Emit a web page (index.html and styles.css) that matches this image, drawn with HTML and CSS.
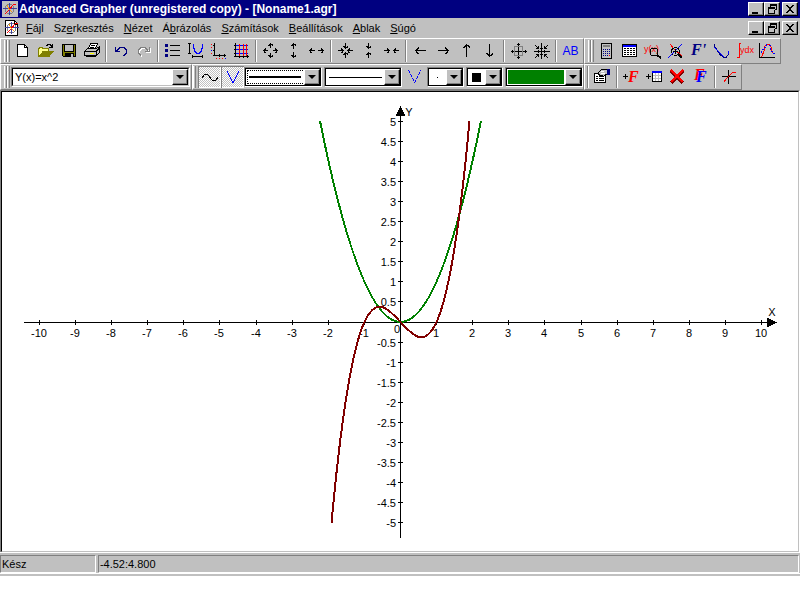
FILE: index.html
```html
<!DOCTYPE html>
<html lang="hu">
<head>
<meta charset="utf-8">
<title>Advanced Grapher</title>
<link rel="stylesheet" href="styles.css">
</head>
<body>
<svg class="defs" aria-hidden="true">
  <defs>
    <g id="min"><path d="M3 9h6v2H3z"/></g>
    <g id="restore"><path d="M5 1h7v6h-3v-1h2V3H6v1H5zM3 4h7v7H3zM4 6v4h5V6z" fill-rule="evenodd"/></g>
    <g id="close"><path d="M3 2h2v1h1v1h2V3h1V2h2v1h-1v1H9v1H8v2h1v1h1v1h1v1H9V9H8V8H6v1H5v1H3V9h1V8h1V7h1V5H5V4H4V3H3z"/></g>
    <g id="logo" fill="none">
      <circle cx="7.500" cy="8" r="4.500" stroke="#808080" stroke-width="1"/>
      <path d="M7.500 2v12M1 7.500h14" stroke="#4040a0"/>
      <path d="M3 13l3-3 5-6 3-1" stroke="#f00"/>
      <path d="M5 4l2 4 3 3" stroke="#f90"/>
    </g>
  </defs>
</svg>

<div class="app">
  <header class="titlebar">
    <svg class="logo tile" viewBox="0 0 16 16"><use href="#logo"/></svg>
    <h1>Advanced Grapher (unregistered copy) - [Noname1.agr]</h1>
    <div class="winbtns">
      <button aria-label="Minimize"><svg viewBox="0 0 14 12"><use href="#min"/></svg></button>
      <button aria-label="Restore"><svg viewBox="0 0 14 12"><use href="#restore"/></svg></button>
      <button aria-label="Close"><svg viewBox="0 0 14 12"><use href="#close"/></svg></button>
    </div>
  </header>

  <nav class="menubar">
    <svg class="logo" viewBox="0 0 16 16"><path d="M1.500.5h9l3 3v12h-12z" fill="#fff" stroke="#000"/><path d="M10.500 1v3H14" fill="none" stroke="#000"/><use href="#logo"/></svg>
    <button><u>F</u>ájl</button>
    <button>Sz<u>e</u>rkesztés</button>
    <button><u>N</u>ézet</button>
    <button>Á<u>b</u>rázolás</button>
    <button><u>S</u>zámítások</button>
    <button><u>B</u>eállítások</button>
    <button><u>A</u>blak</button>
    <button><u>S</u>úgó</button>
    <div class="winbtns">
      <button aria-label="Minimize document"><svg viewBox="0 0 14 12"><use href="#min"/></svg></button>
      <button aria-label="Restore document"><svg viewBox="0 0 14 12"><use href="#restore"/></svg></button>
      <button aria-label="Close document"><svg viewBox="0 0 14 12"><use href="#close"/></svg></button>
    </div>
  </nav>

  <div class="toolrow">
    <div class="group">
      <i class="grip"></i>
      <button class="tool" aria-label="New"><svg viewBox="0 0 23 22"><path d="M6.500 4.500h7l3 3v9h-10z" fill="#fff" stroke="#000"/><path d="M13.500 4v3.500H17" fill="none" stroke="#000"/></svg></button>
      <button class="tool" aria-label="Open"><svg viewBox="0 0 23 22"><path d="M4.500 16.500v-8h1v-1h3v1h6v3" fill="#ff8" stroke="#808000"/><path d="M5 16.500l4-5h10l-4 5z" fill="#808000" stroke="#808000"/><path d="M12 5.500h1v-1h3v1h1v1h1M18.500 4v4M15 7.500h4" fill="none" stroke="#000"/></svg></button>
      <button class="tool" aria-label="Save"><svg viewBox="0 0 23 22"><path d="M5.500 4.500h13v12h-12l-1-1z" fill="#808000" stroke="#000"/><path d="M8 5h8v6H8z" fill="#c0c0c0"/><path d="M7.500 5v6.500h9V5" fill="none" stroke="#000"/><path d="M8 13h9v4H8z"/><path d="M14 14h2v3h-2z" fill="#c0c0c0"/></svg></button>
      <button class="tool" aria-label="Print"><svg viewBox="0 0 23 22"><path d="M8.500 8.500l2-5h7l-2 5z" fill="#fff" stroke="#000"/><path d="M11 5.500h4M10 7.500h4" stroke="#000"/><path d="M4.500 11.500l3-3h9l3-2v6l-3 3h-12z" fill="#c0c0c0" stroke="#000"/><path d="M4.500 11.500h12v3M16 11.500l3-3M6.500 14.500v2h9l3-3" fill="none" stroke="#000"/><path d="M10 13h4v1h-4z" fill="#ff0"/></svg></button>
      <i class="sep"></i>
      <button class="tool" aria-label="Undo"><svg viewBox="0 0 23 22"><path d="M6.500 7v5M6 11.500h5M7 10.500h1v-1h1v-1h1v-1h5v1h1v1h1v4h-1v1h-1v1h-1" fill="none" stroke="#000080"/></svg></button>
      <button class="tool" aria-label="Redo" disabled><svg viewBox="0 0 23 22"><g fill="none"><path d="M18.500 8v5M14 12.500h5M17 11.500h-1v-1h-1v-1h-1v-1H9v1H8v1H7v4h1v1h1v1h1" stroke="#fff"/><path d="M17.500 7v5M13 11.500h5M16 10.500h-1v-1h-1v-1h-1v-1H8v1H7v1H6v4h1v1h1v1h1" stroke="#808080"/></g></svg></button>
      <i class="sep"></i>
      <button class="tool" aria-label="Graph list"><svg viewBox="0 0 23 22"><path d="M4 4h3v3H4zM4 9h3v3H4zM4 14h3v3H4z" fill="#000080"/><path d="M9 5.500h10M9 10.500h10M9 15.500h10" stroke="#000"/></svg></button>
      <button class="tool" aria-label="Graph properties"><svg viewBox="0 0 23 22"><path d="M4 3.500h3M5.500 4v9M4 13.500h3M8 16.500h11M8.500 15v3M18.500 15v3" stroke="#000"/><path d="M9.500 4v4h1v3h1v1h1v1h3v-1h1v-1h1V8h1V4" fill="none" stroke="#00f"/></svg></button>
      <button class="tool" aria-label="Axes"><svg viewBox="0 0 23 22"><path d="M7.500 3v13M6 15.500h13M6 5.500h2M6 10.500h2M12.500 14v3M17.500 14v3" stroke="#000"/><path d="M4 4.500h1M4 7.500h1M4 13.500h1M9 18.500h1M12 18.500h1M15 18.500h1" stroke="#f00"/><path d="M4 10.500h1M18 18.500h1" stroke="#00f"/></svg></button>
      <button class="tool" aria-label="Grid"><svg viewBox="0 0 23 22"><path d="M5.500 3v14M4 16.500h15M4 5.500h2M4 9.500h2M4 13.500h2M9.500 15v3M13.500 15v3M17.500 15v3" stroke="#000"/><path d="M6 5.500h12M6 9.500h12M6 13.500h12" stroke="#00f"/><path d="M9.500 4v12M13.500 4v12M16.500 4v12" stroke="#f00"/></svg></button>
      <i class="sep"></i>
      <button class="tool" aria-label="Zoom in"><svg viewBox="0 0 23 22"><path d="M11.500 3v5M9 5.500h1v-1h3v1h1M11.500 13v5M9 15.500h1v1h3v-1h1M4 10.500h5M6.500 8v1h-1v3h1v1M14 10.500h5M16.500 8v1h1v3h-1v1" fill="none" stroke="#000"/></svg></button>
      <button class="tool" aria-label="Stretch vertically"><svg viewBox="0 0 23 22"><path d="M11.500 3v6M9 5.500h1v-1h3v1h1M11.500 12v6M9 15.500h1v1h3v-1h1" fill="none" stroke="#000"/></svg></button>
      <button class="tool" aria-label="Stretch horizontally"><svg viewBox="0 0 23 22"><path d="M4 10.500h6M6.500 8v1h-1v3h1v1M13 10.500h6M16.500 8v1h1v3h-1v1" fill="none" stroke="#000"/></svg></button>
      <i class="sep"></i>
      <button class="tool" aria-label="Zoom out"><svg viewBox="0 0 23 22"><path d="M11.500 3v6M9 6.500h1v1h3v-1h1M11.500 12v6M9 14.500h1v-1h3v1h1M4 10.500h6M7.500 8v1h1v3h-1v1M13 10.500h6M15.500 8v1h-1v3h1v1" fill="none" stroke="#000"/></svg></button>
      <button class="tool" aria-label="Shrink vertically"><svg viewBox="0 0 23 22"><path d="M11.500 3v6M9 6.500h1v1h3v-1h1M11.500 12v6M9 14.500h1v-1h3v1h1" fill="none" stroke="#000"/></svg></button>
      <button class="tool" aria-label="Shrink horizontally"><svg viewBox="0 0 23 22"><path d="M4 10.500h6M7.500 8v1h1v3h-1v1M13 10.500h6M15.500 8v1h-1v3h1v1" fill="none" stroke="#000"/></svg></button>
      <i class="sep"></i>
      <button class="tool" aria-label="Left"><svg viewBox="0 0 23 22"><path d="M6 10.500h11M9.500 7v1h-1v1h-1v3h1v1h1v1" fill="none" stroke="#000"/></svg></button>
      <button class="tool" aria-label="Right"><svg viewBox="0 0 23 22"><path d="M6 10.500h11M13.500 7v1h1v1h1v3h-1v1h-1v1" fill="none" stroke="#000"/></svg></button>
      <button class="tool" aria-label="Up"><svg viewBox="0 0 23 22"><path d="M11.500 4v13M8 7.500h1v-1h1v-1h3v1h1v1h1" fill="none" stroke="#000"/></svg></button>
      <button class="tool" aria-label="Down"><svg viewBox="0 0 23 22"><path d="M11.500 4v13M8 13.500h1v1h1v1h3v-1h1v-1h1" fill="none" stroke="#000"/></svg></button>
      <i class="sep"></i>
      <button class="tool" aria-label="Default view"><svg viewBox="0 0 23 22"><path d="M4 11.500h16M11.500 3v16M10 4.500h3M10 17.500h3M5.500 10v3M18.500 10v3" stroke="#000"/><path d="M7.500 6.500h8v9h-8z" fill="none" stroke="#808080"/></svg></button>
      <button class="tool" aria-label="Fit view"><svg viewBox="0 0 23 22"><path d="M4 11.500h16M11.500 3v16M10 8.500h3M10 14.500h3M8.500 10v3M14.500 10v3M5 5l4 4M18 5l-4 4M5 18l4-4M18 18l-4-4M6 8.500h3M8.500 6v3M14 8.500h3M14.500 6v3M6 14.500h3M8.500 14v3M14 14.500h3M14.500 14v3" fill="none" stroke="#000"/></svg></button>
      <i class="sep"></i>
      <button class="tool ab">AB</button>
    </div>
    <div class="group">
      <i class="grip"></i>
      <button class="tool" aria-label="Calculator"><svg viewBox="0 0 23 22"><path d="M6.500 3.500h10v15h-10z" fill="#c0c0c0" stroke="#000"/><path d="M8 5h7v2H8z" fill="#808080"/><path d="M8 9.500h8M8 11.500h8M8 13.500h8M8 15.500h8" stroke="#000080" stroke-dasharray="1 1"/><path d="M14 15h1v1h-1z" fill="#f00"/></svg></button>
      <button class="tool" aria-label="Table"><svg viewBox="0 0 23 22"><path d="M4.500 4.500h14v12h-14z" fill="#fff" stroke="#000"/><path d="M5 5h13v2H5z" fill="#00f"/><path d="M6 8.500h11M6 10.500h11M6 12.500h11M6 14.500h11" stroke="#000" stroke-dasharray="2 1"/></svg></button>
      <button class="tool" aria-label="Evaluate"><svg viewBox="0 0 23 22"><text class="red mini" x="3" y="12">y(x)</text><circle cx="13" cy="12" r="4" fill="none" stroke="#000"/><path d="M16 15l4 3" stroke="#000" stroke-width="2"/></svg></button>
      <button class="tool" aria-label="Intersections"><svg viewBox="0 0 23 22"><path d="M4 18L18 4" stroke="#00f"/><path d="M6 4l4 5 8 7" fill="none" stroke="#f00"/><circle cx="11.500" cy="11.500" r="4" fill="none" stroke="#000"/><path d="M9 11.500h5M11.500 9v5" stroke="#000"/><path d="M14 14l4 4" stroke="#000" stroke-width="2"/></svg></button>
      <button class="tool" aria-label="Derivative"><svg viewBox="0 0 23 22"><text class="fn navy" x="4" y="15">F'</text></svg></button>
      <button class="tool" aria-label="Tangent"><svg viewBox="0 0 23 22"><path d="M4.500 4v2l3 5 3 4 3 2h3l2-3" fill="none" stroke="#000080"/><path d="M4 7l10 10M18.500 14v-3" stroke="#00f"/></svg></button>
      <button class="tool" aria-label="Integral"><svg viewBox="0 0 23 22"><path d="M8 3.500H6.500v14H4" fill="none" stroke="#f00"/><text class="red mini" x="7" y="13">ydx</text></svg></button>
      <button class="tool" aria-label="Regression"><svg viewBox="0 0 23 22"><path d="M3.500 3v14.500H19" fill="none" stroke="#000"/><path d="M5 16h1l2-5 1-5 2-2h2l2 3 1 5 2 2" fill="none" stroke="#f00"/><path d="M5 12h2v-3h2V5h5v4h2v3h2v4" fill="none" stroke="#00f" stroke-width="2" stroke-dasharray="1 3"/></svg></button>
    </div>
  </div>

  <div class="toolrow">
    <div class="group">
      <i class="grip"></i>
      <span class="combo function"><select aria-label="Function"><option>Y(x)=x^2</option></select><i class="arrow"></i></span>
    </div>
    <div class="group slim">
      <i class="grip"></i>
      <button class="tool on" aria-label="Show line" aria-pressed="true"><svg viewBox="0 0 23 22"><path d="M4 12l2-3 2-1 2 1 4 5 2 1 2-1 2-3" fill="none" stroke="#000" stroke-width="1"/></svg></button>
      <button class="tool on" aria-label="Show points" aria-pressed="true"><svg viewBox="0 0 23 22"><path d="M6 5l6 12 6-12" fill="none" stroke="#00f"/></svg></button>
      <span class="combo wide thick"><select aria-label="Line width"><option></option></select><i class="arrow"></i></span>
      <span class="combo wide thin"><select aria-label="Line style"><option></option></select><i class="arrow"></i></span>
      <button class="tool" aria-label="Points"><svg viewBox="0 0 23 22"><path d="M4 4h1v1H4zM5 6h1v1H5zM6 8h1v1H6zM7 10h1v1H7zM8 12h1v1H8zM9 14h1v1H9zM10 16h1v1h-1zM11 14h1v1h-1zM12 12h1v1h-1zM13 10h1v1h-1zM14 8h1v1h-1zM15 6h1v1h-1zM16 4h1v1h-1zM5 5h1v1H5zM7 9h1v1H7zM9 13h1v1H9zM11 15h1v1h-1zM13 11h1v1h-1zM15 7h1v1h-1z" fill="#00f"/></svg></button>
      <span class="combo small dot"><select aria-label="Point size"><option></option></select><i class="arrow"></i></span>
      <span class="combo small square"><select aria-label="Point shape"><option></option></select><i class="arrow"></i></span>
      <span class="combo wide green"><select aria-label="Colour"><option></option></select><i class="arrow"></i></span>
    </div>
    <div class="group flush">
      <i class="sep"></i>
      <button class="tool" aria-label="Properties"><svg viewBox="0 0 23 22"><path d="M3.500 7.500h11v9h-11z" fill="#fff" stroke="#000"/><path d="M5 10.500h2M8 10.500h5M5 12.500h2M8 12.500h5M5 14.500h2M8 14.500h5" stroke="#000"/><path d="M7 7l4-4h6v5l-3 1-2 2-1-2-2 1z" fill="#c0c0c0" stroke="#000"/><path d="M10 5.500h3M10 7.500h4" stroke="#fff"/><path d="M16 3h3v6h-3z" fill="#000080"/></svg></button>
      <i class="sep"></i>
      <button class="tool" aria-label="Add graph"><svg viewBox="0 0 23 22"><path d="M3 10.500h5M5.500 8v5" stroke="#000"/><text class="fn red" x="8" y="16">F</text></svg></button>
      <button class="tool" aria-label="Add table"><svg viewBox="0 0 23 22"><path d="M3 10.500h5M5.500 8v5" stroke="#000"/><path d="M9.500 5.500h9v10h-9z" fill="#fff" stroke="#000"/><path d="M9 5h10v2H9z" fill="#00f"/><path d="M10 9.500h8M10 12.500h8M12.500 7v8M15.500 7v8" stroke="#c0c0c0"/></svg></button>
      <button class="tool" aria-label="Delete"><svg viewBox="0 0 23 22"><path d="M5 5l12 12M17 5L5 17" stroke="#800000" stroke-width="3"/><path d="M5 4l12 12M17 4L5 16" stroke="#f00" stroke-width="2"/></svg></button>
      <button class="tool" aria-label="Duplicate"><svg viewBox="0 0 23 22"><text class="fn red" x="5" y="14">F</text><text class="fn blue" x="7" y="16">F</text></svg></button>
      <i class="sep"></i>
      <button class="tool" aria-label="Trace"><svg viewBox="0 0 23 22"><path d="M4 10.500h14M10.500 4v14" stroke="#000"/><path d="M6 16l2-3 4-4 2-2 4-1" fill="none" stroke="#f00"/></svg></button>
    </div>
  </div>

  <main class="sheet">
    <svg class="plot" viewBox="2 92 796 459" role="img" aria-label="Graph">
      <g class="axes">
        <path d="M24 322.500h745M400.500 112v426"/>
        <path d="M39.500 320v5M75.500 320v5M111.500 320v5M147.500 320v5M183.500 320v5M219.500 320v5M256.500 320v5M292.500 320v5M328.500 320v5M364.500 320v5M436.500 320v5M472.500 320v5M508.500 320v5M544.500 320v5M581.500 320v5M617.500 320v5M653.500 320v5M689.500 320v5M725.500 320v5M761.500 320v5"/>
        <path d="M398 121.500h5M398 141.500h5M398 161.500h5M398 181.500h5M398 201.500h5M398 221.500h5M398 241.500h5M398 261.500h5M398 281.500h5M398 301.500h5M398 342.500h5M398 362.500h5M398 382.500h5M398 402.500h5M398 422.500h5M398 442.500h5M398 462.500h5M398 482.500h5M398 502.500h5M398 522.500h5"/>
      </g>
      <path d="M400.500 106l5 10h-10zM777 322.500l-10 5v-10z"/>
      <g class="xlab">
        <text x="39" y="337">-10</text><text x="75" y="337">-9</text><text x="111" y="337">-8</text><text x="147" y="337">-7</text><text x="183" y="337">-6</text><text x="219" y="337">-5</text><text x="256" y="337">-4</text><text x="292" y="337">-3</text><text x="328" y="337">-2</text><text x="364" y="337">-1</text>
        <text x="397" y="333">0</text>
        <text x="436" y="337">1</text><text x="472" y="337">2</text><text x="508" y="337">3</text><text x="544" y="337">4</text><text x="581" y="337">5</text><text x="617" y="337">6</text><text x="653" y="337">7</text><text x="689" y="337">8</text><text x="725" y="337">9</text><text x="761" y="337">10</text>
        <text x="772" y="316">X</text><text x="409" y="116">Y</text>
      </g>
      <g class="ylab">
        <text x="396" y="126">5</text><text x="396" y="146">4.5</text><text x="396" y="166">4</text><text x="396" y="186">3.5</text><text x="396" y="206">3</text><text x="396" y="226">2.5</text><text x="396" y="246">2</text><text x="396" y="266">1.5</text><text x="396" y="286">1</text><text x="396" y="306">0.5</text>
        <text x="396" y="347">-0.5</text><text x="396" y="367">-1</text><text x="396" y="387">-1.5</text><text x="396" y="407">-2</text><text x="396" y="427">-2.5</text><text x="396" y="447">-3</text><text x="396" y="467">-3.5</text><text x="396" y="487">-4</text><text x="396" y="507">-4.5</text><text x="396" y="527">-5</text>
      </g>
      <path class="curve parabola" d="M320 121Q400.500 523 481 121"/>
      <path class="curve cubic" d="M331.500 523C377.500 20 423.500 624 469.500 121"/>
    </svg>
  </main>

  <footer class="status">
    <span class="cell state">Kész</span>
    <span class="cell coords">-4.52:4.800</span>
  </footer>
</div>
</body>
</html>
```
FILE: styles.css
```css
* { box-sizing: border-box; }
body {
  margin: 0;
  background: #fff;
  color: #000;
  font: 11px/14px "Liberation Sans", sans-serif;
}
svg { display: block; shape-rendering: crispEdges; }
.defs { position: absolute; width: 0; height: 0; }
button, select { font: inherit; color: inherit; margin: 0; padding: 0; }
.app { background: #c0c0c0; }

.titlebar {
  display: flex;
  align-items: center;
  gap: 1px;
  height: 18px;
  padding: 0 2px;
  background: #000080;
  color: #fff;
}
.titlebar h1 { margin: 0; font-size: 12px; line-height: 16px; white-space: nowrap; }
.logo { width: 16px; height: 16px; }
.tile { background: #c0c0c0; }

.winbtns { display: flex; margin-left: auto; }
.winbtns button {
  width: 16px;
  height: 14px;
  border: 1px solid;
  border-color: #fff #000 #000 #fff;
  background: #c0c0c0;
  box-shadow: inset -1px -1px #808080;
}
.winbtns button:last-child { margin-left: 2px; }
.winbtns svg { width: 14px; height: 12px; }

.menubar { display: flex; align-items: center; height: 20px; padding: 0 2px 0 4px; }
.menubar .logo { margin-right: 1px; }
.menubar > button { border: 0; background: none; padding: 0 5px; line-height: 18px; }

.toolrow { display: flex; }
.group {
  display: flex;
  align-items: center;
  height: 26px;
  padding: 0 1px 0 3px;
  border: 1px solid;
  border-color: #fff #808080 #808080 #fff;
}
.grip {
  width: 6px;
  height: 22px;
  margin-right: 1px;
  background: repeating-linear-gradient(90deg, #fff 0 1px, #c0c0c0 1px 2px, #808080 2px 3px);
}
.sep {
  width: 2px;
  height: 22px;
  margin: 0 2px;
  border-left: 1px solid #808080;
  border-right: 1px solid #fff;
}
.slim { padding: 0; }
.slim .grip { width: 3px; margin-right: 2px; }
.flush { padding: 0; }
.tool { width: 23px; height: 22px; border: 0; background: none; }
.tool svg { width: 23px; height: 22px; }
.tool.on {
  background: repeating-conic-gradient(#fff 0 25%, #c0c0c0 0 50%) 0 0 / 2px 2px;
  box-shadow: inset 1px 1px #808080, inset -1px -1px #fff;
}
.ab { color: #00f; font-size: 12px; }
.fn { font: italic bold 16px "Liberation Serif", serif; }
.mini { font-size: 9px; }
.red { fill: #f00; }
.blue { fill: #00f; }
.navy { fill: #000080; }

.combo {
  display: grid;
  height: 20px;
  border: 1px solid;
  border-color: #808080 #fff #fff #808080;
}
.slim .combo:not(:last-child) { margin-right: 2px; }
.combo select {
  grid-area: 1 / 1;
  width: 100%;
  height: 18px;
  padding: 0 18px 0 2px;
  border: 1px solid;
  border-color: #000 #c0c0c0 #c0c0c0 #000;
  border-radius: 0;
  appearance: none;
  background: #fff no-repeat;
}
.arrow {
  grid-area: 1 / 1;
  place-self: center end;
  display: grid;
  place-items: center;
  width: 16px;
  height: 16px;
  margin-right: 1px;
  border: 1px solid;
  border-color: #fff #000 #000 #fff;
  background: #c0c0c0;
  box-shadow: inset -1px -1px #808080;
  pointer-events: none;
}
.arrow::before {
  content: "";
  border: solid transparent;
  border-width: 4px 4px 0;
  border-top-color: #000;
}
.function { width: 179px; }
.wide { width: 78px; }
.small { width: 37px; }
.slim select { border-color: #000; }
.thick select { background-image: linear-gradient(#000, #000); background-size: 52px 2px; background-position: 3px 7px; outline: 1px dotted #000; outline-offset: -3px; }
.thin select { background-image: linear-gradient(#000, #000); background-size: 53px 1px; background-position: 3px 8px; }
.dot select { background-image: linear-gradient(#000, #000); background-size: 1px 1px; background-position: 8px 8px; }
.square select { background-image: linear-gradient(#000, #000); background-size: 9px 9px; background-position: 4px 4px; }
.green select { background-image: linear-gradient(#008000, #008000); background-size: 56px 14px; background-position: 1px 1px; }

.sheet {
  padding-left: 1px;
  border-top: 1px solid #808080;
  border-bottom: 1px solid #fff;
  border-right: 1px solid #fff;
  background: #808080;
}
.plot {
  width: 100%;
  height: auto;
  border: 1px solid #c0c0c0;
  border-top-color: #000;
  border-left-color: #000;
  background: #fff;
}
.axes { fill: none; stroke: #000; stroke-width: 1; }
.plot text { font-size: 11px; }
.xlab { text-anchor: middle; }
.ylab { text-anchor: end; }
.curve { fill: none; stroke-width: 2; }
.parabola { stroke: #008000; }
.cubic { stroke: #800000; }

.status { display: flex; gap: 2px; padding: 2px 1px 1px 0; box-shadow: inset 0 -1px #fff; border-bottom: 2px solid #c0c0c0; }
.cell {
  height: 18px;
  padding: 0 1px;
  line-height: 17px;
  border: 1px solid;
  border-color: #808080 #fff #fff #808080;
}
.state { width: 12%; }
.coords { flex: 1; }
```
